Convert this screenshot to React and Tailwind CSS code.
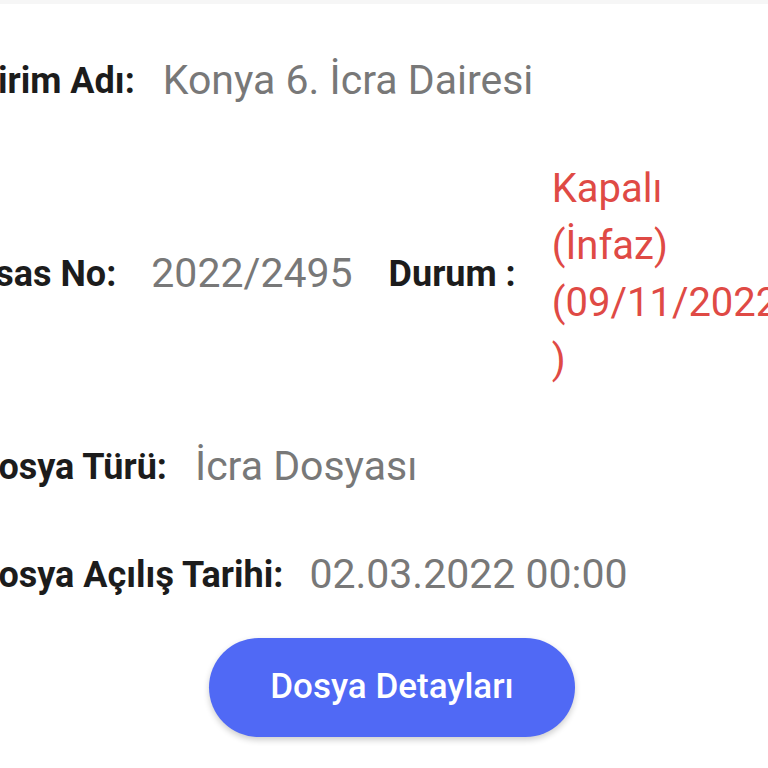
export default function App() {
  const font = { fontFamily: "Roboto, 'Noto Sans', Arial, sans-serif" };
  return (
    <div className="w-[768px] h-[768px] overflow-hidden bg-white relative" style={font}>
      <div className="h-[4px] bg-[#f6f6f6]" />
      <div className="flex flex-col -ml-[25px]">
        <div className="mt-[48px] h-[57px] flex items-center whitespace-nowrap">
          <span className="text-[36px] font-bold text-[#1c1c1c]">Birim Adı:</span>
          <span className="ml-[28px] text-[41px] text-[#787878]">Konya 6. İcra Dairesi</span>
        </div>
        <div className="mt-[51px] flex items-center whitespace-nowrap">
          <span className="text-[36px] font-bold text-[#1c1c1c]">Esas No:</span>
          <span className="ml-[35px] text-[41px] text-[#787878]">2022/2495</span>
          <span className="ml-[36px] text-[36px] font-bold text-[#1c1c1c]">Durum :</span>
          <div className="ml-[36px] flex flex-col text-[40px] leading-[57px] text-[#df4a45]">
            <span>Kapalı</span>
            <span>(İnfaz)</span>
            <span>(09/11/2022</span>
            <span>)</span>
          </div>
        </div>
        <div className="mt-[50px] h-[57px] flex items-center whitespace-nowrap">
          <span className="text-[36px] font-bold text-[#1c1c1c]">Dosya Türü:</span>
          <span className="ml-[28px] text-[41px] text-[#787878]">İcra Dosyası</span>
        </div>
        <div className="mt-[51px] h-[57px] flex items-center whitespace-nowrap">
          <span className="text-[36px] font-bold text-[#1c1c1c]">Dosya Açılış Tarihi:</span>
          <span className="ml-[26px] text-[41px] text-[#787878]">02.03.2022 00:00</span>
        </div>
      </div>
      <div className="mt-[35px] flex justify-center pl-[16px]">
        <button className="w-[366px] h-[99px] rounded-full bg-[#5069f5] text-white text-[35px] font-medium shadow-[0_3px_6px_rgba(0,0,0,0.2)]">
          Dosya Detayları
        </button>
      </div>
    </div>
  );
}
